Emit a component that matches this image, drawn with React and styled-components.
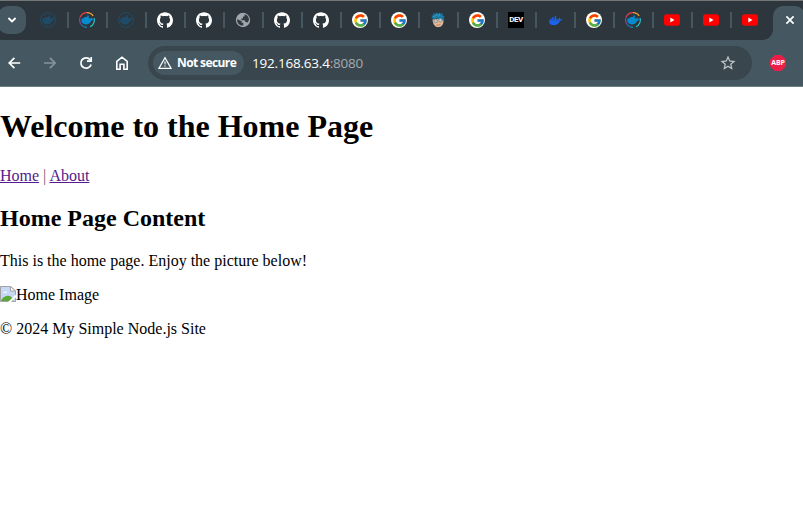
import React from "react";
import styled, { createGlobalStyle } from "styled-components";
import { SiGithub, SiDocker } from "react-icons/si";
import { FcGoogle } from "react-icons/fc";
import { MdStarBorder } from "react-icons/md";

const Global = createGlobalStyle`
  * { box-sizing: border-box; }
  html, body { margin: 0; background: #fff; overflow: hidden; }
  svg { display: block; flex: none; }
`;

const Window = styled.div`
  width: 803px;
  height: 532px;
  overflow: hidden;
  background: #fff;
`;

const TabStrip = styled.div`
  display: flex;
  height: 40px;
  padding-top: 5px;
  background: #2c363c;
  border-top: 1px solid #757677;
`;

const TabSearch = styled.button`
  display: flex;
  flex: none;
  align-items: center;
  justify-content: center;
  width: 28px;
  height: 28px;
  margin: 0 4px 0 -2px;
  padding: 0;
  border: 0;
  border-radius: 10px;
  background: #455861;
`;

const Tabs = styled.div`
  display: flex;
  height: 28px;
  align-items: center;
`;

const Tab = styled.div`
  display: flex;
  align-items: center;
  width: 39px;
  height: 16px;
  padding-left: 10px;
  border-right: 2px solid ${(p) => (p.$last ? "transparent" : "#455861")};

  & > * { opacity: ${(p) => (p.$dim ? 0.5 : 1)}; }
`;

const Disc = styled.span`
  display: flex;
  align-items: center;
  justify-content: center;
  flex: none;
  width: 16px;
  height: 16px;
  border-radius: 50%;
  background: #fff;
`;

const DevBadge = styled.span`
  flex: none;
  width: 16px;
  height: 16px;
  background: #000;
  color: #fff;
  font: 700 8px/16px "Roboto", sans-serif;
  letter-spacing: -0.5px;
  text-align: center;
`;

const ActiveTab = styled.div`
  position: relative;
  flex: none;
  width: 32px;
  height: 34px;
  margin-left: 2px;
  padding: 9px 0 0 12px;
  border-radius: 10px 10px 0 0;
  background: #455861;

  &::before {
    content: "";
    position: absolute;
    left: -10px;
    bottom: 0;
    width: 10px;
    height: 10px;
    background: radial-gradient(circle at 0 0, transparent 9.5px, #455861 10px);
  }
`;

const Toolbar = styled.div`
  display: flex;
  align-items: center;
  height: 47px;
  padding-left: 5px;
  background: #455861;
  border-bottom: 1px solid #707e86;
`;

const NavButton = styled.span`
  display: flex;
  justify-content: center;
  width: 18px;
  margin-right: 18px;
  color: ${(p) => (p.$off ? "#87939a" : "#fff")};
`;

const AddressBar = styled.div`
  display: flex;
  align-items: center;
  width: 604px;
  height: 34px;
  margin-left: -1px;
  padding: 0 15px 0 5px;
  border-radius: 17px;
  background: #39464d;
  font-family: "Open Sans", "Noto Sans", sans-serif;
`;

const Security = styled.div`
  display: flex;
  align-items: center;
  gap: 5px;
  width: 91px;
  height: 24px;
  padding-left: 5px;
  border-radius: 12px;
  background: #455861;
  color: #fff;
  font-size: 12px;
  font-weight: 700;
  letter-spacing: -0.6px;
  line-height: 22px;
  white-space: nowrap;
`;

const Address = styled.div`
  flex: 1;
  margin-left: 8px;
  padding-bottom: 1px;
  color: #fff;
  font-size: 13.5px;
  letter-spacing: -0.2px;
`;

const Port = styled.span`
  color: #a3abae;
`;

const Extension = styled.div`
  display: flex;
  align-items: center;
  justify-content: center;
  width: 16px;
  height: 16px;
  margin-left: 18px;
  background: #ed1e45;
  clip-path: polygon(30% 0, 70% 0, 100% 30%, 100% 70%, 70% 100%, 30% 100%, 0 70%, 0 30%);
  color: #fff;
  font: 700 7px/14px "Open Sans", sans-serif;
  letter-spacing: -0.15px;
`;

const Page = styled.main`
  display: flow-root;
  color: #000;
  font: 16px "Liberation Serif", "Times New Roman", serif;
`;

const Title = styled.h1`
  margin: 21.44px 0;
  font-size: 32px;
`;

const Subtitle = styled.h2`
  margin: 19.92px 0;
  font-size: 24px;
`;

const Paragraph = styled.p`
  margin: 16px 0;
`;

const PageNav = styled.nav`
  color: #66586f;
`;

const ImageLine = styled.div`
  display: flex;
  align-items: flex-start;
`;

const PageLink = styled.a`
  color: #551a8b;
  text-decoration: underline;
`;

const whale =
  "M2.2 7.3h1V6.2h2V5h3V3.6h1.6v2.6h1.5v1.1c.6-.5.3-1.3.8-2 .7.4.9 1 .9 1.6.6-.1 1 0 1.4.3-.5 1-1.2 1.2-2 1.2-1 2.8-3 4-5.5 4-3.2 0-4.8-1.7-4.7-5.1Z";

const DockerRing = () => (
  <svg width="16" height="16" viewBox="0 0 16 16" fill="none" strokeWidth="1.2">
    <path d="M1.2 5A7.4 7.4 0 0 1 8 .6" stroke="#e9434b" />
    <path d="M8 .6A7.4 7.4 0 0 1 14.2 4" stroke="#f5a33b" />
    <path d="M15 6A7.4 7.4 0 0 1 11 14.8" stroke="#28c5c6" />
    <path d="M8 15.4A7.4 7.4 0 0 1 2.2 12.5" stroke="#1684bd" />
    <path d="M2.2 12.5A7.4 7.4 0 0 1 1.2 5" stroke="#7a4b9d" />
    <path d={whale} fill="#078bcf" />
  </svg>
);

const DockerMuted = () => (
  <svg width="16" height="16" viewBox="0 0 16 16">
    <circle cx="8" cy="8" r="7.4" fill="none" stroke="#126395" strokeWidth="1" />
    <path d={whale} fill="#126395" />
  </svg>
);

const Globe = () => (
  <svg width="16" height="16" viewBox="0 0 16 16">
    <circle cx="8" cy="8" r="7.2" fill="#a1a6ac" />
    <path d="M2.1 7.2 6.6 9v1.7h1.7v2.8C4.5 14 1.8 11 2.1 7.2ZM9.6 2.3c3 .7 4.6 3.3 4.3 6-.5 1.1-1.1 1.9-1.8 2.5-.4-1-1.2-1-2.2-1V8.3H7L5.8 6.8l2.1-.3V4.7l1.7-.4Z" fill="#303a40" />
  </svg>
);

const Face = () => (
  <svg width="16" height="16" viewBox="0 0 16 16">
    <path d="M2.5 7.5 13 6.3c1.5 4-.3 8.2-3.8 8.8C5.5 15.8 2.8 12.5 2.5 7.5Z" fill="#e5b998" />
    <path d="M1.2 3.4 4 3.2 2.6.9l3.2 1L6 .4l2.2 1.1L10 .4l.7 1.4 2.5-.4-1 1.6 2.7 1.7-1.6.6 1.1 2.4-1.4 1.7-1.4-2.6-2.3.2-1.6-.4L5.4 6.8l-2 .4-.7.5.2-1.5-2-.8 1.7-.8Z" fill="#197aa6" />
    <path d="m3.2 4.5 2.4-.7M6 2.5l1.5 1.2M9.5 2.3 9 4.2" stroke="#3eb0d1" strokeWidth=".8" />
    <g fill="#c8c6c0" stroke="#727b79" strokeWidth=".6">
      <circle cx="5.7" cy="9" r="1.8" />
      <circle cx="10.4" cy="8.3" r="1.8" />
    </g>
    <path d="M6.5 13c1.5.4 3 .1 4-.8" stroke="#925f49" strokeWidth=".7" fill="none" />
  </svg>
);

const YouTube = () => (
  <svg width="16" height="16" viewBox="0 0 16 16">
    <rect y="2.3" width="16" height="11.4" rx="2.7" fill="#f00" />
    <path d="M6.3 5.6v4.8L10.5 8Z" fill="#fff" />
  </svg>
);

const WhaleSlot = styled.span`
  display: flex;
  justify-content: center;
  width: 16px;
`;

const Google = () => <Disc><FcGoogle size={15} /></Disc>;
const GitHub = () => <SiGithub size={16} color="#fff" />;
const Whale = () => <WhaleSlot><SiDocker size={13} color="#1d63ed" /></WhaleSlot>;
const Dev = () => <DevBadge>DEV</DevBadge>;

const Close = () => (
  <svg width="10" height="10" viewBox="0 0 10 10" stroke="#fff" strokeWidth="1.7">
    <path d="m1.4 1.4 7.2 7.2M8.6 1.4 1.4 8.6" />
  </svg>
);

const Arrow = ({ flip }) => (
  <svg width="14" height="14" viewBox="0 0 14 14" fill="none" stroke="currentColor" strokeWidth="1.7">
    <path d={flip ? "M1 7h10.8M6.9 1.8 12.1 7l-5.2 5.2" : "M13.2 7H2.4M7.4 1.8 2.2 7l5.2 5.2"} />
  </svg>
);

const Reload = () => (
  <svg width="14" height="14" viewBox="0 0 14 14" fill="none" stroke="currentColor" strokeWidth="1.7">
    <path d="M12.1 8.4A5.2 5.2 0 1 1 11.2 3.8L12 4.8" />
    <path d="M12.2 1v4.2H8" />
  </svg>
);

const Warning = () => (
  <svg width="14" height="14" viewBox="0 0 14 14" fill="none" stroke="#fff">
    <path d="M7 1.8 13 12.3H1Z" strokeWidth="1.3" />
    <path d="M7 5.3v3.2M7 9.5v1.3" strokeWidth="1.1" />
  </svg>
);

const Home = () => (
  <svg width="14" height="16" viewBox="0 0 14 16" fill="none" stroke="currentColor" strokeWidth="1.6">
    <path d="M1.8 14.2V6.5L7 2.2l5.2 4.3v7.7H8.9V9.3H5.1v4.9Z" />
  </svg>
);

const Chevron = () => (
  <svg width="10" height="8" viewBox="0 0 10 8" fill="none" stroke="#fff" strokeWidth="1.8">
    <path d="m1.4 2 3.6 3.5L8.6 2" />
  </svg>
);

const BrokenImage = () => (
  <svg width="16" height="16" viewBox="0 0 16 16">
    <path d="M.5.5h10L15.5 5v10.5H.5Z" fill="#c5d8f7" stroke="#a2a2a2" />
    <path d="M10.5.5V5h5Z" fill="#fff" stroke="#a2a2a2" />
    <path d="M3 6.7c0-1 1.1-1.3 1.7-.8.5-1.3 2.3-.9 2.3.8Z" fill="#fff" />
    <path d="M1 15c1-2.7 3.9-5.2 7-5.2 2.8 0 4.7 2 5.3 5.2Z" fill="#58aa37" />
    <path d="m16 8.5-8 7.5h3l5-4.7Z" fill="#fff" />
  </svg>
);

const tabs = [
  { Icon: DockerMuted, dim: true }, { Icon: DockerRing }, { Icon: DockerMuted, dim: true },
  { Icon: GitHub }, { Icon: GitHub }, { Icon: Globe }, { Icon: GitHub }, { Icon: GitHub },
  { Icon: Google }, { Icon: Google }, { Icon: Face }, { Icon: Google }, { Icon: Dev },
  { Icon: Whale }, { Icon: Google }, { Icon: DockerRing }, { Icon: YouTube }, { Icon: YouTube }, { Icon: YouTube },
];

export default function App() {
  return (
    <Window>
      <Global />
      <TabStrip>
        <TabSearch aria-label="Search tabs"><Chevron /></TabSearch>
        <Tabs>
          {tabs.map(({ Icon, dim }, i) => (
            <Tab key={i} $dim={dim} $last={i === tabs.length - 1}><Icon /></Tab>
          ))}
        </Tabs>
        <ActiveTab><Close /></ActiveTab>
      </TabStrip>
      <Toolbar>
        <NavButton><Arrow /></NavButton>
        <NavButton $off><Arrow flip /></NavButton>
        <NavButton><Reload /></NavButton>
        <NavButton><Home /></NavButton>
        <AddressBar>
          <Security><Warning />Not secure</Security>
          <Address>192.168.63.4<Port>:8080</Port></Address>
          <MdStarBorder size={18} color="#c1c7ca" />
        </AddressBar>
        <Extension>ABP</Extension>
      </Toolbar>
      <Page>
        <Title>Welcome to the Home Page</Title>
        <PageNav><PageLink>Home</PageLink> | <PageLink>About</PageLink></PageNav>
        <Subtitle>Home Page Content</Subtitle>
        <Paragraph>This is the home page. Enjoy the picture below!</Paragraph>
        <ImageLine><BrokenImage />Home Image</ImageLine>
        <Paragraph>© 2024 My Simple Node.js Site</Paragraph>
      </Page>
    </Window>
  );
}
